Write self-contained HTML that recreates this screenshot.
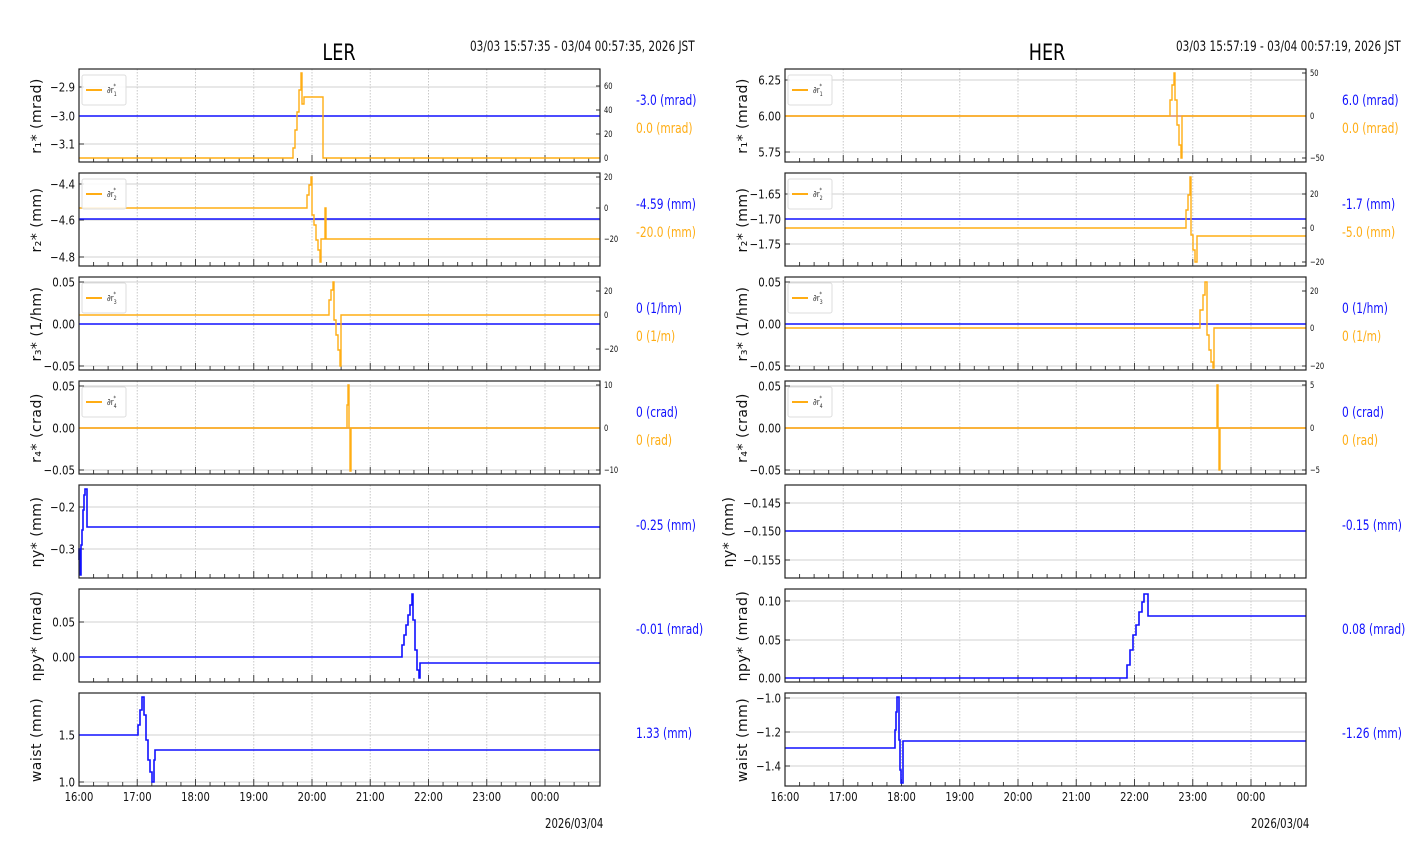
<!DOCTYPE html>
<html><head><meta charset="utf-8"><style>
html,body{margin:0;padding:0;background:#fff;width:1412px;height:864px;overflow:hidden}
svg{display:block;font-family:"DejaVu Sans","Liberation Sans",sans-serif}
</style></head><body>
<svg id="s" width="1412" height="864" xmlns="http://www.w3.org/2000/svg"></svg>
<script>
const S=document.getElementById('s');const NS='http://www.w3.org/2000/svg';
function el(t,a,txt){const e=document.createElementNS(NS,t);for(const k in a)e.setAttribute(k,a[k]);if(txt!==undefined)e.textContent=txt;S.appendChild(e);return e;}
function line(x1,y1,x2,y2,st,w,da){el('line',{x1,y1,x2,y2,stroke:st,'stroke-width':w||1,'stroke-dasharray':da||'none'});}
function txt(x,y,s,sz,fill,anchor,sx,extra){const a={x:0,y:0,'font-size':sz,fill:fill||'#000','text-anchor':anchor||'start',transform:`translate(${x},${y}) scale(${sx||0.8},1)`};Object.assign(a,extra||{});return el('text',a,s);}
const BLUE='#1010ff',OR='#ffad14';
function panel(x0,yt,yb,lt,rt,blue,orange,bcol,leg){
  const x1=x0+521;
  for(let i=0;i<=8;i++){const x=x0+i*58.25;line(x,yt,x,yb,'#c8c8c8',1,'1.5,1.5');}
  lt.forEach(([v,y])=>{line(x0,y,x1,y,'#d0d0d0',1);line(x0,y,x0+5,y,'#333',1);txt(x0-4,y+4.5,v,12.5,'#111','end',0.82);});
  for(let i=0;i<=35;i++){const x=x0+i*58.25/4;const L=i%4==0?7:4;line(x,yb,x,yb-L,'#444',1);}
  if(rt)rt.forEach(([v,y])=>{line(x1,y,x1-4,y,'#333',1);txt(x1+4,y+3,v,9,'#111','start',0.75);});
  if(blue)el('path',{d:blue,stroke:bcol||BLUE,'stroke-width':1.6,fill:'none'});
  if(orange)el('path',{d:orange,stroke:OR,'stroke-width':1.4,fill:'none'});
  el('rect',{x:x0,y:yt,width:521,height:yb-yt,fill:'none',stroke:'#222','stroke-width':1.2});
  if(leg){el('rect',{x:x0+3,y:yt+6,width:44,height:30,rx:2,fill:'#fff','fill-opacity':0.85,stroke:'#ddd'});
    line(x0+7,yt+21,x0+23,yt+21,OR,2);
    const t=txt(x0+28,yt+24,'∂r',9,'#333','start',0.8);
    const ts=document.createElementNS(NS,'tspan');ts.setAttribute('font-size','6');ts.setAttribute('dy','3');ts.textContent=leg;t.appendChild(ts);
    const t2=document.createElementNS(NS,'tspan');t2.setAttribute('font-size','6');t2.setAttribute('dx','-4');t2.setAttribute('dy','-8');t2.textContent='*';t.appendChild(t2);}
}
function ylab(x,y,s){return el('text',{x:0,y:0,'font-size':14,fill:'#111','text-anchor':'middle','letter-spacing':'0.5',transform:`translate(${x},${y}) rotate(-90)`},s);}
function side(x0,titleX,title,range,rangeX,datX,P,labX,labs,ylabs){
  txt(titleX,60,title,22,'#000','middle',0.8);
  txt(rangeX,51,range,14,'#111','start',0.75);
  const pans=[[69,162],[173,266],[277,370],[381,474],[485,578],[589,682],[693,786]];
  P.forEach((p,i)=>panel(x0,pans[i][0],pans[i][1],p.lt,p.rt,p.b,p.o,p.bc,p.leg));
  for(let i=0;i<=8;i++){const h=(16+i)%24;txt(x0+i*58.25,801,(h<10?'0':'')+h+':00',12.5,'#111','middle',0.8);}
  txt(datX,828,'2026/03/04',13,'#111','start',0.78);
  labs.forEach(([y,s,c])=>txt(labX,y,s,14,c,'start',0.76));
  ylabs.forEach(([y,s,dx])=>ylab(x0-38-(dx||0),y,s));
}
const L=79,R=785;
side(L,339,'LER','03/03 15:57:35 - 03/04 00:57:35, 2026 JST',470,545,[
 {lt:[['−2.9',87],['−3.0',116],['−3.1',144]],rt:[['60',86],['40',110],['20',134],['0',158]],b:`M${L} 116H600`,o:`M${L} 158H293V148H295V130H297V112H299V90H301V73H302V104H304V97H323V158H600`,leg:'1'},
 {lt:[['−4.4',184],['−4.6',220],['−4.8',257]],rt:[['20',177],['0',208],['−20',239]],b:`M${L} 219H600`,o:`M${L} 208H307V195H309V185H311V177H312V215H314V225H316V240H318V250H320V262H321V239H325V208H326V239H600`,leg:'2'},
 {lt:[['0.05',282],['0.00',324],['−0.05',366]],rt:[['20',291],['0',315],['−20',349]],b:`M${L} 324H600`,o:`M${L} 315H329V300H331V290H333V282H334V320H336V335H338V350H340V366H341V315H600`,leg:'3'},
 {lt:[['0.05',386],['0.00',428],['−0.05',470]],rt:[['10',385],['0',428],['−10',470]],b:`M${L} 428H600`,bc:'#d88a70',o:`M${L} 428H347V405H348V385H349V428H350V471H351V428H600`,leg:'4'},
 {lt:[['−0.2',507],['−0.3',549]],b:`M${L} 560V549H80V575H81V545H82V530H83V510H84V495H85V489H87V527H600`},
 {lt:[['0.05',622],['0.00',657]],b:`M${L} 657H402V645H404V635H406V625H408V615H410V605H412V594H413V620H415V650H417V670H419V678H420V663H600`},
 {lt:[['1.5',735],['1.0',782]],b:`M${L} 735H138V725H140V710H142V697H144V715H146V740H148V760H150V772H152V782H154V760H155V750H600`}
],636,[[105,'-3.0 (mrad)',BLUE],[133,'0.0 (mrad)',OR],[209,'-4.59 (mm)',BLUE],[237,'-20.0 (mm)',OR],[313,'0 (1/hm)',BLUE],[341,'0 (1/m)',OR],[417,'0 (crad)',BLUE],[445,'0 (rad)',OR],[530,'-0.25 (mm)',BLUE],[634,'-0.01 (mrad)',BLUE],[738,'1.33 (mm)',BLUE]],
[[116,'r₁* (mrad)'],[220,'r₂* (mm)'],[324,'r₃* (1/hm)'],[428,'r₄* (crad)'],[532,'ηy* (mm)'],[636,'ηpy* (mrad)'],[740,'waist (mm)']]);
side(R,1047,'HER','03/03 15:57:19 - 03/04 00:57:19, 2026 JST',1176,1251,[
 {lt:[['6.25',80],['6.00',116],['5.75',152]],rt:[['50',73],['0',116],['−50',158]],b:`M${R} 116H1306`,bc:'#d88a70',o:`M${R} 116H1170V100H1172V85H1174V73H1175V100H1177V125H1179V145H1181V158H1182V116H1306`,leg:'1'},
 {lt:[['−1.65',194],['−1.70',219],['−1.75',244]],rt:[['20',194],['0',228],['−20',262]],b:`M${R} 219H1306`,o:`M${R} 228H1186V210H1188V195H1190V177H1191V235H1193V250H1195V262H1197V236H1306`,leg:'2'},
 {lt:[['0.05',282],['0.00',324],['−0.05',366]],rt:[['20',291],['0',328],['−20',366]],b:`M${R} 324H1306`,o:`M${R} 328H1200V310H1203V295H1205V282H1207V335H1209V350H1211V362H1213V368H1214V328H1306`,leg:'3'},
 {lt:[['0.05',386],['0.00',428],['−0.05',470]],rt:[['5',385],['0',428],['−5',470]],b:`M${R} 428H1306`,bc:'#d88a70',o:`M${R} 428H1217V385H1218V428H1219V470H1220V428H1306`,leg:'4'},
 {lt:[['−0.145',503],['−0.150',531],['−0.155',560]],b:`M${R} 531H1306`},
 {lt:[['0.10',601],['0.05',640],['0.00',678]],b:`M${R} 678H1127V665H1130V650H1133V635H1136V625H1139V612H1142V602H1144V594H1148V616H1306`},
 {lt:[['−1.0',698],['−1.2',732],['−1.4',766]],b:`M${R} 748H895V730H896V712H897V697H899V740H900V770H901V783H903V741H1306`}
],1342,[[105,'6.0 (mrad)',BLUE],[133,'0.0 (mrad)',OR],[209,'-1.7 (mm)',BLUE],[237,'-5.0 (mm)',OR],[313,'0 (1/hm)',BLUE],[341,'0 (1/m)',OR],[417,'0 (crad)',BLUE],[445,'0 (rad)',OR],[530,'-0.15 (mm)',BLUE],[634,'0.08 (mrad)',BLUE],[738,'-1.26 (mm)',BLUE]],
[[116,'r₁* (mrad)'],[220,'r₂* (mm)'],[324,'r₃* (1/hm)'],[428,'r₄* (crad)'],[532,'ηy* (mm)',14],[636,'ηpy* (mrad)'],[740,'waist (mm)']]);
</script>
</body></html>
